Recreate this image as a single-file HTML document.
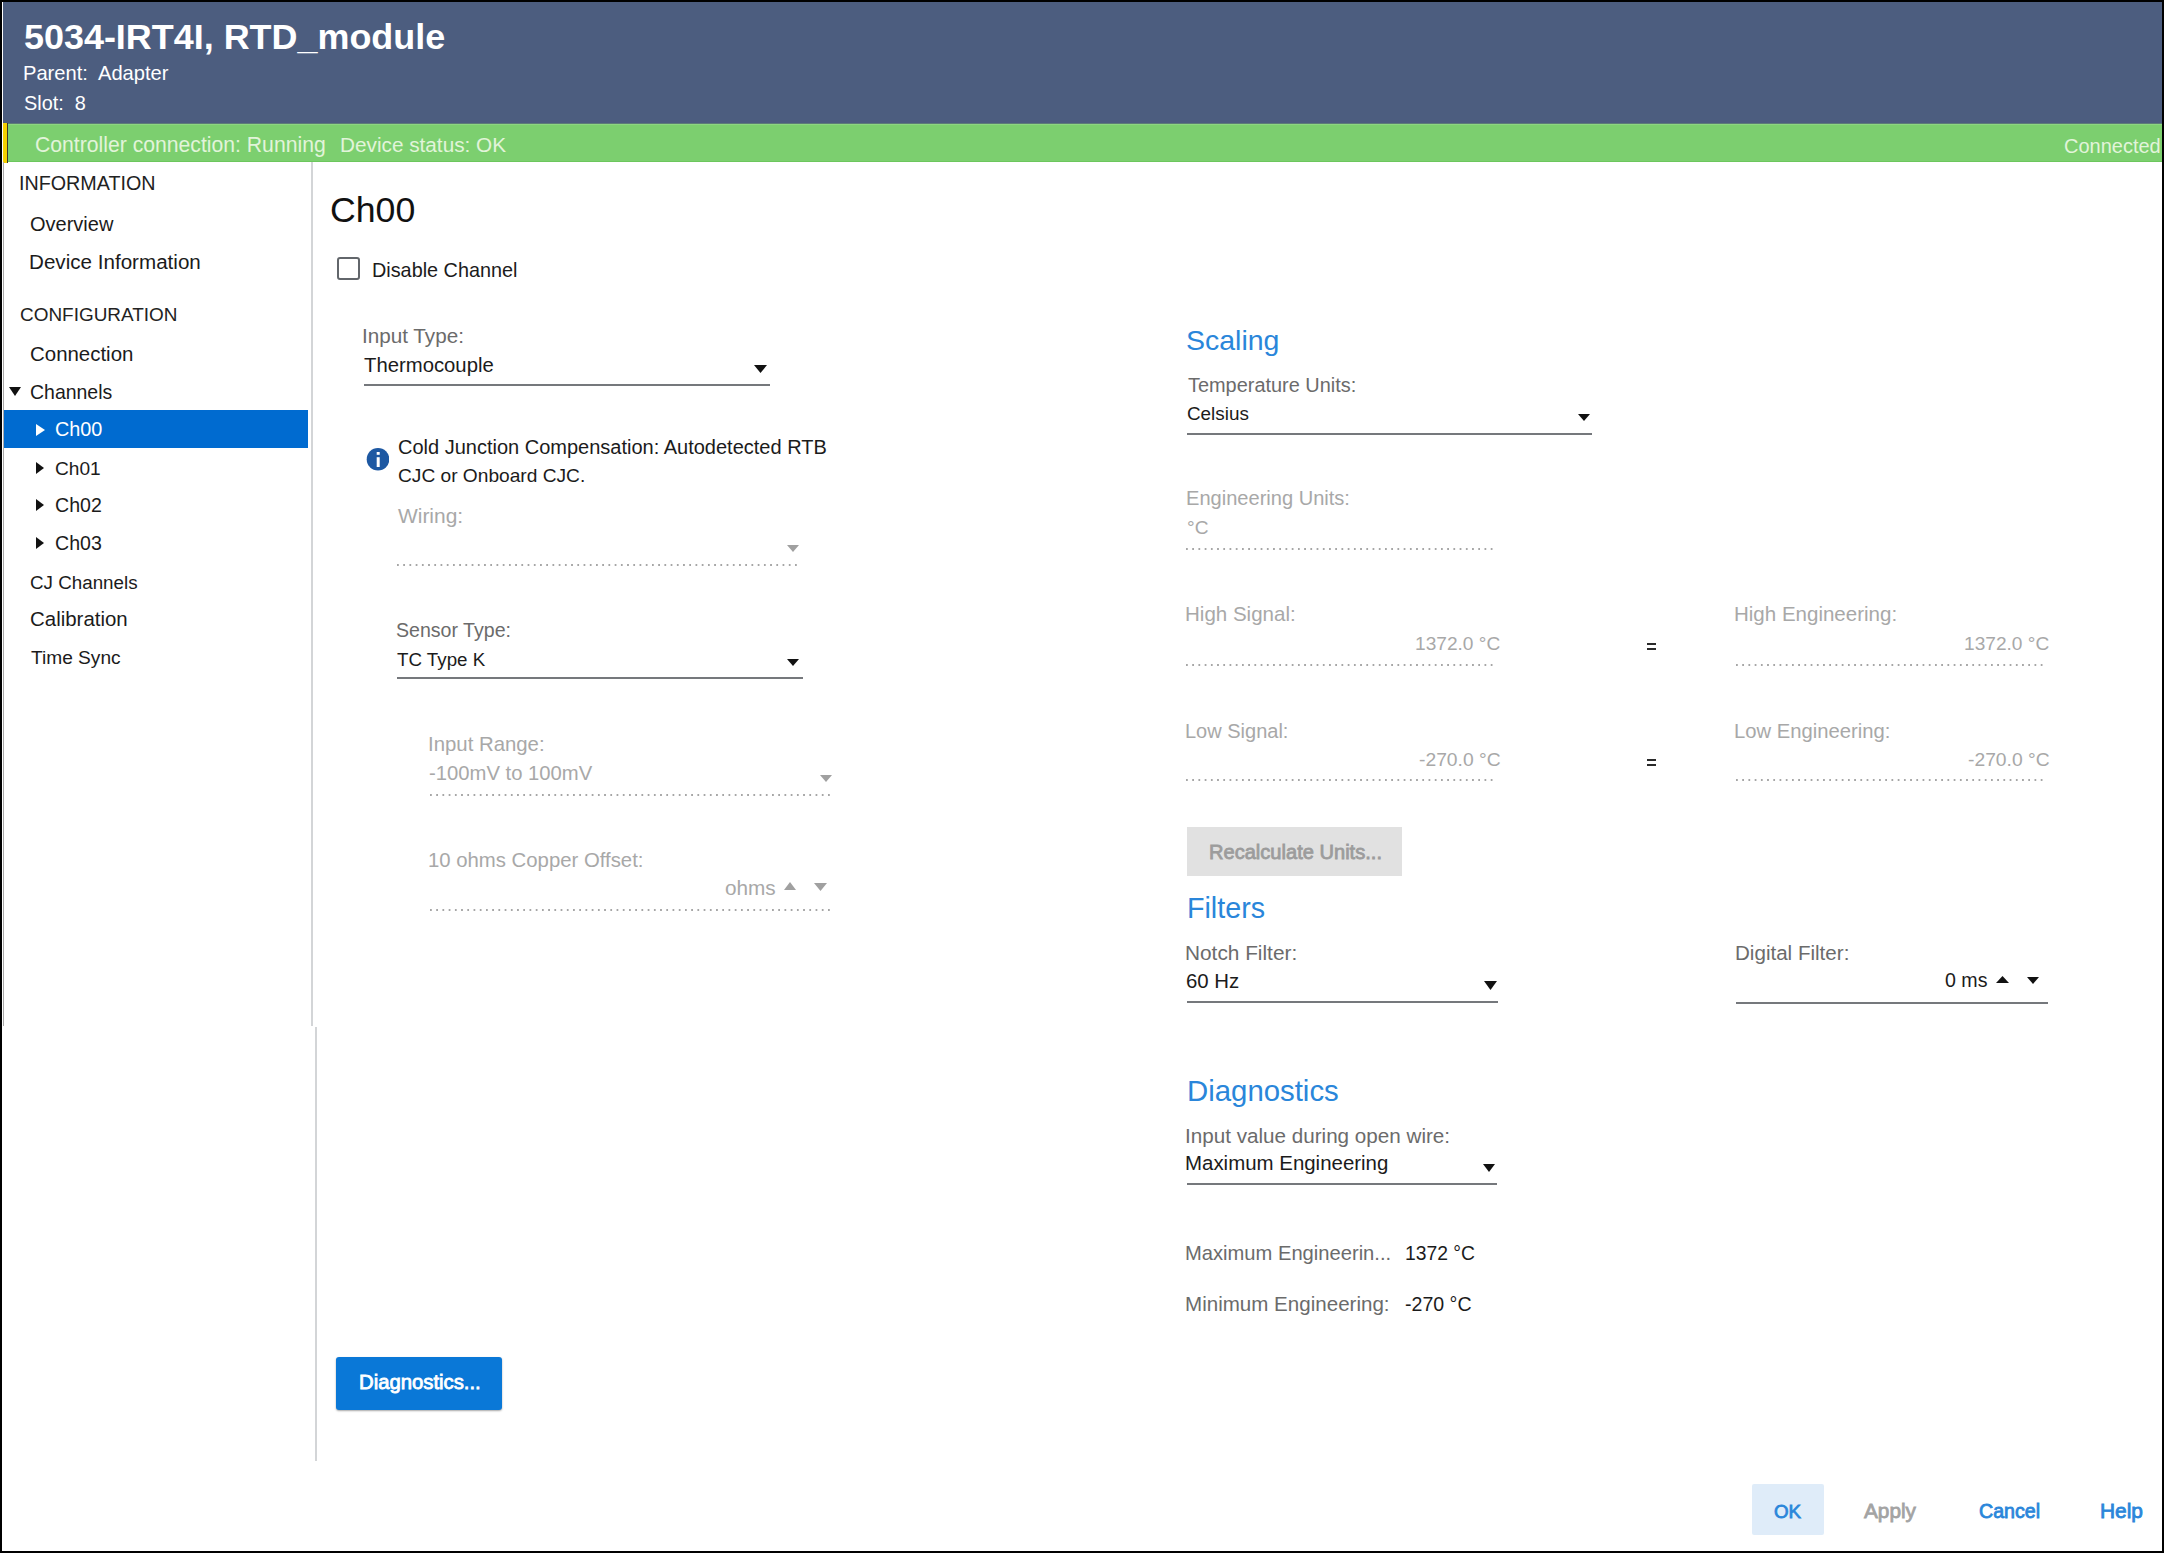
<!DOCTYPE html>
<html><head><meta charset="utf-8"><style>
html,body{margin:0;padding:0;}
body{width:2164px;height:1553px;position:relative;overflow:hidden;background:#000;font-family:'Liberation Sans', sans-serif;}
#page{position:absolute;left:2px;top:2px;width:2160px;height:1549px;background:#fff;}
.t{position:absolute;line-height:1;white-space:nowrap;}
.r{position:absolute;}
.dot{background-image:linear-gradient(90deg,#a6a6a6 0,#a6a6a6 2px,transparent 2px);background-size:6.23px 2px;background-repeat:repeat-x;}
</style></head><body><div id="page"></div>
<div class="r" style="left:2px;top:2px;width:2160px;height:122px;background:#4c5d7f;"></div>
<div class="r" style="left:2px;top:2px;width:1px;height:1024px;background:#ffffff;"></div>
<div class="r" style="left:3px;top:124px;width:2159px;height:38px;background:#7ccf6f;"></div>
<div class="r" style="left:8px;top:124px;width:2154px;height:1px;background:#8dd681;"></div>
<div class="r" style="left:8px;top:161px;width:2154px;height:1px;background:#6cc75d;"></div>
<div class="r" style="left:3px;top:123px;width:2159px;height:1px;background:#5d7d78;"></div>
<div class="r" style="left:3px;top:123px;width:4px;height:40px;background:#f5d000;"></div>
<div class="r" style="left:7px;top:123px;width:1px;height:40px;background:#3a3a2a;"></div>
<div class="r" style="left:3px;top:162px;width:1px;height:864px;background:#a9a9a9;"></div>
<div class="r" style="left:311px;top:162px;width:2px;height:864px;background:#d3d5d7;"></div>
<div class="r" style="left:315px;top:1027px;width:2px;height:434px;background:#d3d5d7;"></div>
<svg class="r" style="left:9px;top:387px" width="12" height="9" viewBox="0 0 12 9"><polygon points="0,0 12,0 6.0,9" fill="#111"/></svg>
<div class="r" style="left:4px;top:410px;width:304px;height:38px;background:#006bd0;"></div>
<svg class="r" style="left:36px;top:424px" width="9" height="12" viewBox="0 0 9 12"><polygon points="0,0 9,6.0 0,12" fill="#fff"/></svg>
<svg class="r" style="left:36px;top:462px" width="8" height="12" viewBox="0 0 8 12"><polygon points="0,0 8,6.0 0,12" fill="#111"/></svg>
<svg class="r" style="left:36px;top:499px" width="8" height="12" viewBox="0 0 8 12"><polygon points="0,0 8,6.0 0,12" fill="#111"/></svg>
<svg class="r" style="left:36px;top:537px" width="8" height="12" viewBox="0 0 8 12"><polygon points="0,0 8,6.0 0,12" fill="#111"/></svg>
<div class="r" style="left:337px;top:257px;width:19px;height:19px;border:2px solid #62666b;border-radius:3px"></div>
<svg class="r" style="left:754px;top:365px" width="13" height="8" viewBox="0 0 13 8"><polygon points="0,0 13,0 6.5,8" fill="#111"/></svg>
<div class="r" style="left:364px;top:384px;width:406px;height:2px;background:#75787c;"></div>
<svg class="r" style="left:366px;top:448px" width="23" height="23"><circle cx="12" cy="11.3" r="11.3" fill="#1d58a2"/><rect x="10.7" y="4" width="3" height="2.8" fill="#fff"/><rect x="10.7" y="9.2" width="3" height="9.8" fill="#fff"/></svg>
<svg class="r" style="left:787px;top:545px" width="12" height="7" viewBox="0 0 12 7"><polygon points="0,0 12,0 6.0,7" fill="#a0a0a0"/></svg>
<div class="r dot" style="left:397px;top:564px;width:401px;height:2px;"></div>
<svg class="r" style="left:787px;top:659px" width="12" height="7" viewBox="0 0 12 7"><polygon points="0,0 12,0 6.0,7" fill="#111"/></svg>
<div class="r" style="left:397px;top:677px;width:406px;height:2px;background:#75787c;"></div>
<svg class="r" style="left:820px;top:775px" width="12" height="7" viewBox="0 0 12 7"><polygon points="0,0 12,0 6.0,7" fill="#a0a0a0"/></svg>
<div class="r dot" style="left:430px;top:794px;width:401px;height:2px;"></div>
<svg class="r" style="left:784px;top:882px" width="12" height="8" viewBox="0 0 12 8"><polygon points="0,8 12,8 6.0,0" fill="#a0a0a0"/></svg>
<svg class="r" style="left:814px;top:883px" width="13" height="8" viewBox="0 0 13 8"><polygon points="0,0 13,0 6.5,8" fill="#a0a0a0"/></svg>
<div class="r dot" style="left:430px;top:909px;width:401px;height:2px;"></div>
<svg class="r" style="left:1578px;top:414px" width="12" height="7" viewBox="0 0 12 7"><polygon points="0,0 12,0 6.0,7" fill="#111"/></svg>
<div class="r" style="left:1187px;top:433px;width:405px;height:2px;background:#75787c;"></div>
<div class="r dot" style="left:1186px;top:548px;width:308px;height:2px;"></div>
<div class="r dot" style="left:1186px;top:664px;width:308px;height:2px;"></div>
<div class="r" style="left:1647px;top:643px;width:9px;height:2px;background:#2a2a2a;"></div>
<div class="r" style="left:1647px;top:648px;width:9px;height:2px;background:#2a2a2a;"></div>
<div class="r dot" style="left:1736px;top:664px;width:308px;height:2px;"></div>
<div class="r dot" style="left:1186px;top:779px;width:308px;height:2px;"></div>
<div class="r" style="left:1647px;top:759px;width:9px;height:2px;background:#2a2a2a;"></div>
<div class="r" style="left:1647px;top:764px;width:9px;height:2px;background:#2a2a2a;"></div>
<div class="r dot" style="left:1736px;top:779px;width:308px;height:2px;"></div>
<div class="r" style="left:1187px;top:827px;width:215px;height:49px;background:#e1e1e1;"></div>
<svg class="r" style="left:1484px;top:981px" width="13" height="9" viewBox="0 0 13 9"><polygon points="0,0 13,0 6.5,9" fill="#111"/></svg>
<div class="r" style="left:1187px;top:1001px;width:311px;height:2px;background:#75787c;"></div>
<svg class="r" style="left:1996px;top:976px" width="13" height="7" viewBox="0 0 13 7"><polygon points="0,7 13,7 6.5,0" fill="#111"/></svg>
<svg class="r" style="left:2027px;top:977px" width="12" height="7" viewBox="0 0 12 7"><polygon points="0,0 12,0 6.0,7" fill="#111"/></svg>
<div class="r" style="left:1736px;top:1002px;width:312px;height:2px;background:#75787c;"></div>
<svg class="r" style="left:1483px;top:1164px" width="12" height="8" viewBox="0 0 12 8"><polygon points="0,0 12,0 6.0,8" fill="#111"/></svg>
<div class="r" style="left:1187px;top:1183px;width:310px;height:2px;background:#75787c;"></div>
<div class="r" style="left:336px;top:1357px;width:166px;height:53px;background:#0a78d7;border-radius:3px;box-shadow:0 1px 2px rgba(0,0,0,.35)"></div>
<div class="r" style="left:1752px;top:1484px;width:72px;height:51px;background:#dfecf9;border-radius:2px"></div>
<div id="t0" class="t" style="left:24px;top:19px;font-size:35.93px;color:#fff;font-weight:bold">5034-IRT4I, RTD_module</div>
<div id="t1" class="t" style="left:23px;top:63px;font-size:20.14px;color:#fff;font-weight:normal">Parent:&nbsp; Adapter</div>
<div id="t2" class="t" style="left:24px;top:94px;font-size:19.88px;color:#fff;font-weight:normal">Slot:&nbsp; 8</div>
<div id="t3" class="t" style="left:35px;top:134px;font-size:21.18px;color:#e2f4da;font-weight:normal">Controller connection: Running</div>
<div id="t4" class="t" style="left:340px;top:135px;font-size:20.76px;color:#e2f4da;font-weight:normal">Device status: OK</div>
<div id="t5" class="t" style="left:2064px;top:136px;font-size:20px;color:#e2f4da;font-weight:normal">Connected</div>
<div id="t6" class="t" style="left:19px;top:174px;font-size:19.73px;color:#222;font-weight:normal">INFORMATION</div>
<div id="t7" class="t" style="left:30px;top:214px;font-size:20px;color:#1b1b1b;font-weight:normal">Overview</div>
<div id="t8" class="t" style="left:29px;top:252px;font-size:20.62px;color:#1b1b1b;font-weight:normal">Device Information</div>
<div id="t9" class="t" style="left:20px;top:306px;font-size:18.94px;color:#222;font-weight:normal">CONFIGURATION</div>
<div id="t10" class="t" style="left:30px;top:344px;font-size:20.44px;color:#1b1b1b;font-weight:normal">Connection</div>
<div id="t11" class="t" style="left:30px;top:383px;font-size:19.48px;color:#1b1b1b;font-weight:normal">Channels</div>
<div id="t12" class="t" style="left:55px;top:420px;font-size:19.82px;color:#fff;font-weight:normal">Ch00</div>
<div id="t13" class="t" style="left:55px;top:459px;font-size:19.13px;color:#1b1b1b;font-weight:normal">Ch01</div>
<div id="t14" class="t" style="left:55px;top:496px;font-size:19.57px;color:#1b1b1b;font-weight:normal">Ch02</div>
<div id="t15" class="t" style="left:55px;top:534px;font-size:19.57px;color:#1b1b1b;font-weight:normal">Ch03</div>
<div id="t16" class="t" style="left:30px;top:574px;font-size:18.79px;color:#1b1b1b;font-weight:normal">CJ Channels</div>
<div id="t17" class="t" style="left:30px;top:609px;font-size:20.45px;color:#1b1b1b;font-weight:normal">Calibration</div>
<div id="t18" class="t" style="left:31px;top:648px;font-size:19.14px;color:#1b1b1b;font-weight:normal">Time Sync</div>
<div id="t19" class="t" style="left:330px;top:193px;font-size:35.69px;color:#111;font-weight:normal">Ch00</div>
<div id="t20" class="t" style="left:372px;top:261px;font-size:19.82px;color:#1b1b1b;font-weight:normal">Disable Channel</div>
<div id="t21" class="t" style="left:362px;top:326px;font-size:20.68px;color:#6b6b6b;font-weight:normal">Input Type:</div>
<div id="t22" class="t" style="left:364px;top:355px;font-size:20.31px;color:#1b1b1b;font-weight:normal">Thermocouple</div>
<div id="t23" class="t" style="left:398px;top:437px;font-size:20px;color:#1b1b1b;font-weight:normal">Cold Junction Compensation: Autodetected RTB</div>
<div id="t24" class="t" style="left:398px;top:466px;font-size:19.15px;color:#1b1b1b;font-weight:normal">CJC or Onboard CJC.</div>
<div id="t25" class="t" style="left:398px;top:506px;font-size:20.93px;color:#a8a8a8;font-weight:normal">Wiring:</div>
<div id="t26" class="t" style="left:396px;top:621px;font-size:19.59px;color:#6b6b6b;font-weight:normal">Sensor Type:</div>
<div id="t27" class="t" style="left:397px;top:651px;font-size:18.75px;color:#1b1b1b;font-weight:normal">TC Type K</div>
<div id="t28" class="t" style="left:428px;top:734px;font-size:20.38px;color:#a8a8a8;font-weight:normal">Input Range:</div>
<div id="t29" class="t" style="left:429px;top:763px;font-size:20.26px;color:#a8a8a8;font-weight:normal">-100mV to 100mV</div>
<div id="t30" class="t" style="left:428px;top:850px;font-size:20.33px;color:#a8a8a8;font-weight:normal">10 ohms Copper Offset:</div>
<div id="t31" class="t" style="left:725px;top:878px;font-size:20.76px;color:#a8a8a8;font-weight:normal">ohms</div>
<div id="t32" class="t" style="left:1186px;top:326px;font-size:28.49px;color:#2a86da;font-weight:normal">Scaling</div>
<div id="t33" class="t" style="left:1188px;top:376px;font-size:19.92px;color:#6b6b6b;font-weight:normal">Temperature Units:</div>
<div id="t34" class="t" style="left:1187px;top:405px;font-size:18.88px;color:#1b1b1b;font-weight:normal">Celsius</div>
<div id="t35" class="t" style="left:1186px;top:488px;font-size:20.07px;color:#a8a8a8;font-weight:normal">Engineering Units:</div>
<div id="t36" class="t" style="left:1187px;top:518px;font-size:19.11px;color:#a8a8a8;font-weight:normal">°C</div>
<div id="t37" class="t" style="left:1185px;top:604px;font-size:20.54px;color:#a8a8a8;font-weight:normal">High Signal:</div>
<div id="t38" class="t" style="left:1415px;top:634px;font-size:19.12px;color:#a8a8a8;font-weight:normal">1372.0 °C</div>
<div id="t39" class="t" style="left:1734px;top:604px;font-size:20.53px;color:#a8a8a8;font-weight:normal">High Engineering:</div>
<div id="t40" class="t" style="left:1964px;top:634px;font-size:19.12px;color:#a8a8a8;font-weight:normal">1372.0 °C</div>
<div id="t41" class="t" style="left:1185px;top:721px;font-size:20px;color:#a8a8a8;font-weight:normal">Low Signal:</div>
<div id="t42" class="t" style="left:1419px;top:750px;font-size:19.28px;color:#a8a8a8;font-weight:normal">-270.0 °C</div>
<div id="t43" class="t" style="left:1734px;top:721px;font-size:20.24px;color:#a8a8a8;font-weight:normal">Low Engineering:</div>
<div id="t44" class="t" style="left:1968px;top:750px;font-size:19.28px;color:#a8a8a8;font-weight:normal">-270.0 °C</div>
<div id="t45" class="t" style="left:1209px;top:842px;font-size:20.08px;color:#9c9c9c;font-weight:normal;-webkit-text-stroke:0.8px #9c9c9c">Recalculate Units...</div>
<div id="t46" class="t" style="left:1187px;top:894px;font-size:28.67px;color:#2a86da;font-weight:normal">Filters</div>
<div id="t47" class="t" style="left:1185px;top:943px;font-size:20.82px;color:#6b6b6b;font-weight:normal">Notch Filter:</div>
<div id="t48" class="t" style="left:1186px;top:971px;font-size:20.4px;color:#1b1b1b;font-weight:normal">60 Hz</div>
<div id="t49" class="t" style="left:1735px;top:943px;font-size:20.59px;color:#6b6b6b;font-weight:normal">Digital Filter:</div>
<div id="t50" class="t" style="left:1945px;top:971px;font-size:19.62px;color:#1b1b1b;font-weight:normal">0 ms</div>
<div id="t51" class="t" style="left:1187px;top:1076px;font-size:29.36px;color:#2a86da;font-weight:normal">Diagnostics</div>
<div id="t52" class="t" style="left:1185px;top:1126px;font-size:20.65px;color:#6b6b6b;font-weight:normal">Input value during open wire:</div>
<div id="t53" class="t" style="left:1185px;top:1153px;font-size:20.47px;color:#1b1b1b;font-weight:normal">Maximum Engineering</div>
<div id="t54" class="t" style="left:1185px;top:1243px;font-size:20.16px;color:#6b6b6b;font-weight:normal">Maximum Engineerin...</div>
<div id="t55" class="t" style="left:1405px;top:1244px;font-size:19.31px;color:#1b1b1b;font-weight:normal">1372 °C</div>
<div id="t56" class="t" style="left:1185px;top:1294px;font-size:20.57px;color:#6b6b6b;font-weight:normal">Minimum Engineering:</div>
<div id="t57" class="t" style="left:1405px;top:1295px;font-size:19.58px;color:#1b1b1b;font-weight:normal">-270 °C</div>
<div id="t58" class="t" style="left:359px;top:1372px;font-size:20.29px;color:#fff;font-weight:normal;-webkit-text-stroke:0.8px #fff">Diagnostics...</div>
<div id="t59" class="t" style="left:1774px;top:1503px;font-size:18.74px;color:#2a86da;font-weight:normal;-webkit-text-stroke:0.8px #2a86da">OK</div>
<div id="t60" class="t" style="left:1864px;top:1501px;font-size:20.8px;color:#a3a3a3;font-weight:normal;-webkit-text-stroke:0.8px #a3a3a3">Apply</div>
<div id="t61" class="t" style="left:1979px;top:1502px;font-size:19.61px;color:#2a86da;font-weight:normal;-webkit-text-stroke:0.8px #2a86da">Cancel</div>
<div id="t62" class="t" style="left:2100px;top:1501px;font-size:20.9px;color:#2a86da;font-weight:normal;-webkit-text-stroke:0.8px #2a86da">Help</div>
</body></html>
